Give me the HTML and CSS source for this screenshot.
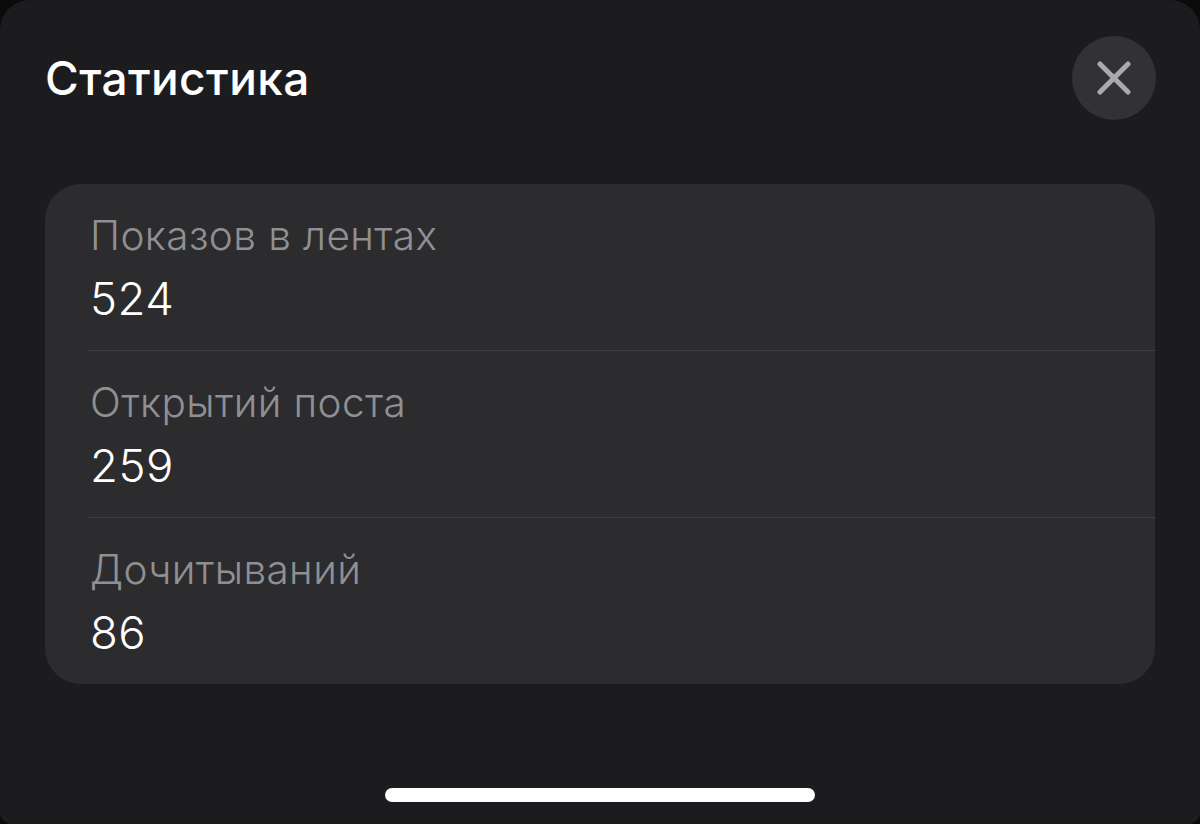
FILE: index.html
```html
<!DOCTYPE html>
<html lang="ru">
<head>
<meta charset="utf-8">
<title>Статистика</title>
<link rel="stylesheet" href="styles.css">
</head>
<body>
<main class="sheet">
  <header class="header">
    <h1 class="title">Статистика</h1>
    <button class="close" aria-label="Закрыть">
      <svg class="close-icon" width="34" height="34" viewBox="0 0 34 34"><path d="M3 3L31 31M31 3L3 31"/></svg>
    </button>
  </header>
  <section class="card">
    <div class="row">
      <div class="label">Показов в лентах</div>
      <div class="value">524</div>
    </div>
    <div class="row">
      <div class="label">Открытий поста</div>
      <div class="value">259</div>
    </div>
    <div class="row">
      <div class="label">Дочитываний</div>
      <div class="value">86</div>
    </div>
  </section>
  <div class="home-indicator"></div>
</main>
</body>
</html>
```
FILE: styles.css
```css
* { box-sizing: border-box; }
html, body { margin: 0; height: 100%; background: #0b0b0c; }
body { font-family: Inter, "Noto Sans", sans-serif; overflow: hidden; }
.sheet {
  width: 1200px;
  height: 824px;
  background: #1c1c1e;
  border-radius: 30px 30px 12px 12px;
  padding: 36px 45px 0 45px;
  display: flex;
  flex-direction: column;
}
.header {
  display: flex;
  justify-content: space-between;
  align-items: center;
  height: 84px;
  margin-right: -1px;
}
.title {
  margin: 0;
  font-size: 46px;
  font-weight: 550;
  letter-spacing: 0.4px;
  line-height: 84px;
  color: #fff;
}
.close {
  width: 84px;
  height: 84px;
  border: 0;
  padding: 0;
  border-radius: 50%;
  background: #323236;
  display: flex;
  align-items: center;
  justify-content: center;
}
.close-icon path {
  fill: none;
  stroke: #a9a9b0;
  stroke-width: 5;
  stroke-linecap: round;
}
.card {
  margin-top: 64px;
  height: 500px;
  background: #2c2c2e;
  border-radius: 36px;
  padding-left: 44px;
}
.row {
  height: 167px;
  padding-top: 26px;
  border-bottom: 1px solid #3f3f41;
}
.row:last-child { border-bottom: 0; height: 166px; }
.label {
  padding-left: 1px;
  font-size: 40.5px;
  font-weight: 350;
  letter-spacing: 0.4px;
  line-height: 52px;
  color: #909092;
}
.value {
  padding-left: 1px;
  font-size: 45.5px;
  font-weight: 350;
  letter-spacing: 0.5px;
  line-height: 56px;
  margin-top: 9px;
  color: #fff;
}
.home-indicator {
  width: 430px;
  height: 14px;
  margin: 104px 0 0 340px;
  border-radius: 7px;
  background: #fff;
}
```
